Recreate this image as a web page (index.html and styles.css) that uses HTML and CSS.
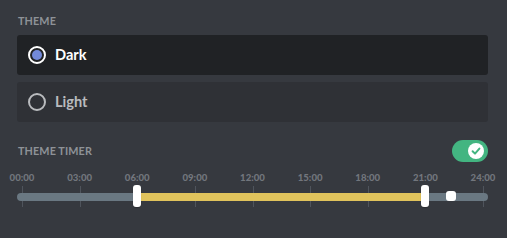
FILE: index.html
```html
<!DOCTYPE html>
<html lang="en">
<head>
<meta charset="utf-8">
<title>Theme</title>
<link rel="stylesheet" href="styles.css">
</head>
<body>
<div class="page">
  <h5 class="label">Theme</h5>
  <div class="radios">
    <div class="radio selected">
      <span class="circle"><span class="dot"></span></span>
      <span class="radio-text">Dark</span>
    </div>
    <div class="radio">
      <span class="circle"></span>
      <span class="radio-text">Light</span>
    </div>
  </div>

  <div class="timer-head">
    <h5 class="label">Theme timer</h5>
    <div class="toggle">
      <span class="knob">
        <svg viewBox="0 0 16 16" width="16" height="16"><path d="M4.6 8.3 L7 10.6 L11.4 5.6" fill="none" stroke="#43b581" stroke-width="2" stroke-linecap="round" stroke-linejoin="round"/></svg>
      </span>
    </div>
  </div>

  <div class="slider">
    <div class="scale">
      <div class="mark" style="left:0%"><span class="mark-text">00:00</span><span class="tick"></span></div>
      <div class="mark" style="left:12.5%"><span class="mark-text">03:00</span><span class="tick"></span></div>
      <div class="mark" style="left:25%"><span class="mark-text">06:00</span><span class="tick"></span></div>
      <div class="mark" style="left:37.5%"><span class="mark-text">09:00</span><span class="tick"></span></div>
      <div class="mark" style="left:50%"><span class="mark-text">12:00</span><span class="tick"></span></div>
      <div class="mark" style="left:62.5%"><span class="mark-text">15:00</span><span class="tick"></span></div>
      <div class="mark" style="left:75%"><span class="mark-text">18:00</span><span class="tick"></span></div>
      <div class="mark" style="left:87.5%"><span class="mark-text">21:00</span><span class="tick"></span></div>
      <div class="mark" style="left:100%"><span class="mark-text">24:00</span><span class="tick"></span></div>
    </div>
    <div class="track"></div>
    <div class="range">
      <div class="fill" style="left:25%;width:62.5%"></div>
      <div class="handle" style="left:25%"></div>
      <div class="handle" style="left:87.5%"></div>
      <div class="now" style="left:93.1%"></div>
    </div>
  </div>
</div>
</body>
</html>
```

FILE: styles.css
```css
html, body {
  margin: 0;
  padding: 0;
  background: #36393f;
}

body {
  font-family: Lato, "Noto Sans", "Liberation Sans", sans-serif;
  width: 507px;
  height: 238px;
  overflow: hidden;
}

.page {
  padding: 14px 19px 0 17px;
}

.label {
  margin: 0;
  padding-left: 1px;
  font-size: 10.8px;
  line-height: 14px;
  font-weight: 700;
  text-transform: uppercase;
  color: #8e9297;
  letter-spacing: 0.01em;
}

.radios {
  margin-top: 7px;
  display: flex;
  flex-direction: column;
  gap: 7.5px;
}

.radio {
  height: 39.5px;
  box-sizing: border-box;
  display: flex;
  align-items: center;
  gap: 9px;
  padding-left: 11px;
  border-radius: 3px;
  background: #2f3136;
}

.radio.selected {
  background: #202225;
}

.circle {
  width: 18px;
  height: 18px;
  box-sizing: border-box;
  border-radius: 50%;
  border: 2px solid #b9bbbe;
  display: flex;
  align-items: center;
  justify-content: center;
}

.selected .circle {
  border-color: #ffffff;
}

.dot {
  width: 10px;
  height: 10px;
  border-radius: 50%;
  background: #7289da;
}

.radio-text {
  font-size: 14.6px;
  font-weight: 700;
  color: #b9bbbe;
}

.selected .radio-text {
  color: #ffffff;
}

.timer-head {
  margin-top: 18px;
  display: flex;
  align-items: center;
  justify-content: space-between;
}

.toggle {
  width: 36px;
  height: 22px;
  border-radius: 11px;
  background: #43b581;
  display: flex;
  align-items: center;
  justify-content: flex-end;
  padding-right: 4px;
  box-sizing: border-box;
}

.knob {
  width: 16px;
  height: 16px;
  border-radius: 50%;
  background: #ffffff;
  display: flex;
}

.slider {
  position: relative;
  margin-top: 11px;
  height: 40px;
}

.scale,
.range {
  position: absolute;
  left: 5px;
  right: 5px;
  top: 0;
  bottom: 0;
}

.mark {
  position: absolute;
  top: 0;
  width: 0;
}

.mark-text {
  position: absolute;
  top: -0.5px;
  left: 0;
  transform: translateX(-50%);
  font-size: 9.6px;
  line-height: 11px;
  font-weight: 900;
  color: #72767d;
  white-space: nowrap;
}

.tick {
  position: absolute;
  top: 13px;
  left: 0;
  width: 1px;
  height: 21px;
  background: #4f545c;
}

.track {
  position: absolute;
  left: 0;
  right: 0;
  top: 20px;
  height: 8px;
  border-radius: 4px;
  background: #6a7882;
}

.fill {
  position: absolute;
  top: 20px;
  height: 8px;
  background: #e0c35c;
}

.handle {
  position: absolute;
  top: 12.5px;
  width: 8px;
  height: 22px;
  margin-left: -4px;
  border-radius: 3px;
  background: #ffffff;
  box-shadow: 0 1px 1px rgba(0, 0, 0, 0.2);
}

.now {
  position: absolute;
  top: 18px;
  width: 10px;
  height: 10px;
  margin-left: -5px;
  border-radius: 3px;
  background: #ffffff;
}
```
